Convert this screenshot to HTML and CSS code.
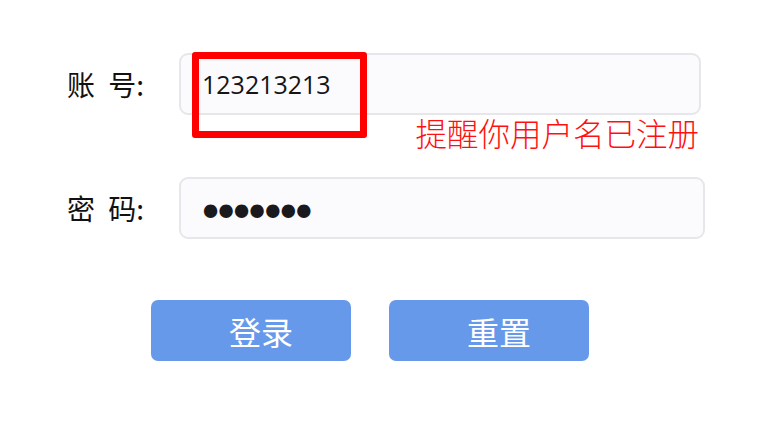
FILE: index.html
```html
<!DOCTYPE html>
<html lang="zh-CN">
<head>
<meta charset="utf-8">
<title>登录</title>
<link rel="stylesheet" href="styles.css">
</head>
<body>
<form class="login">
  <div class="row">
    <label class="label" for="user">账 号:</label>
    <div class="field">
      <input id="user" class="input input-user" type="text" value="123213213">
      <div class="mark"></div>
    </div>
  </div>
  <div class="hint">提醒你用户名已注册</div>
  <div class="row row-pass">
    <label class="label" for="pass">密 码:</label>
    <div class="field">
      <input id="pass" class="input input-pass" type="password" value="1234567">
    </div>
  </div>
  <div class="actions">
    <button type="button" class="btn">登录</button>
    <button type="button" class="btn">重置</button>
  </div>
</form>
</body>
</html>
```

FILE: styles.css
```css
html, body {
  margin: 0;
  padding: 0;
  background: #ffffff;
}

.login {
  padding: 53px 0 0 67px;
  font-family: "Noto Sans CJK SC", sans-serif;
}

.row {
  display: flex;
  align-items: center;
  height: 62px;
}

.label {
  width: 112px;
  font-size: 28px;
  font-weight: 400;
  line-height: 1;
  color: #111;
  word-spacing: 7px;
}

.field {
  position: relative;
}

.input {
  box-sizing: border-box;
  height: 62px;
  border: 2px solid #e7e6ea;
  border-radius: 9px;
  background: #fbfafd;
  padding: 0 0 0 21px;
  font-family: "Open Sans", sans-serif;
  font-size: 25px;
  color: #151515;
  outline: none;
}

.input-user {
  width: 522px;
}

.input-pass {
  width: 526px;
  padding: 10px 0 0 16px;
  font-family: "DejaVu Sans", sans-serif;
  font-size: 46px;
  letter-spacing: -11.6px;
  color: #1a1a1e;
}

.mark {
  position: absolute;
  left: 13px;
  top: -1px;
  width: 175px;
  height: 86px;
  box-sizing: border-box;
  border: 7px solid #ff0000;
  border-radius: 3px;
}

.hint {
  width: 632px;
  margin-top: 1px;
  text-align: right;
  font-size: 31.5px;
  font-weight: 300;
  line-height: 32px;
  color: #ff1010;
}

.row-pass {
  margin-top: 29px;
}

.actions {
  display: flex;
  gap: 38px;
  margin: 61px 0 0 84px;
}

.btn {
  width: 200px;
  height: 61px;
  border: none;
  border-radius: 7px;
  background: #6699ea;
  color: #ffffff;
  font-family: "Noto Sans CJK SC", sans-serif;
  font-size: 32px;
  padding: 0 0 0 20px;
  line-height: 1;
}
```
